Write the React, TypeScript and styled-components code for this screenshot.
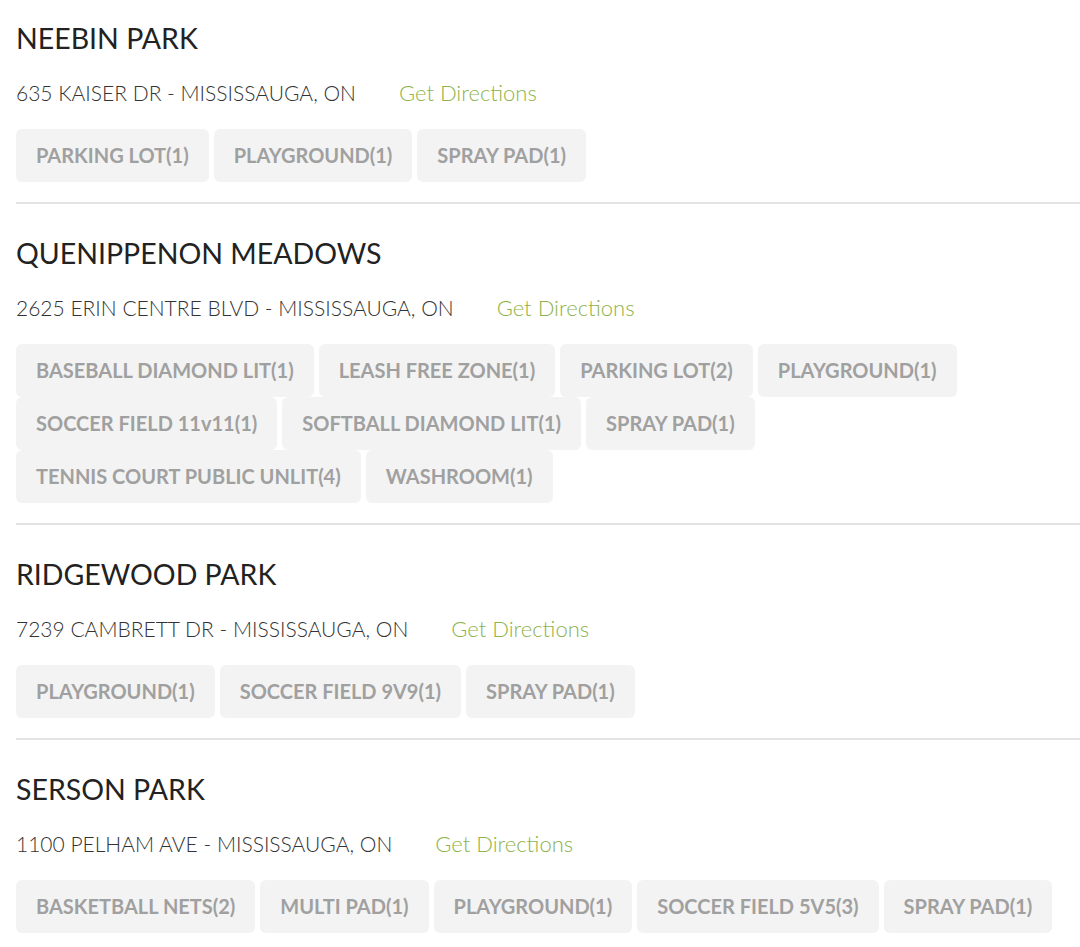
import styled, { createGlobalStyle } from 'styled-components';

const GlobalStyle = createGlobalStyle`
  body {
    margin: 0;
    background: #ffffff;
    font-family: Lato, 'Open Sans', sans-serif;
  }
`;

type Park = {
  name: string;
  address: string;
  amenities: string[];
};

const parks: Park[] = [
  {
    name: 'NEEBIN PARK',
    address: '635 KAISER DR - MISSISSAUGA, ON',
    amenities: ['PARKING LOT(1)', 'PLAYGROUND(1)', 'SPRAY PAD(1)'],
  },
  {
    name: 'QUENIPPENON MEADOWS',
    address: '2625 ERIN CENTRE BLVD - MISSISSAUGA, ON',
    amenities: [
      'BASEBALL DIAMOND LIT(1)',
      'LEASH FREE ZONE(1)',
      'PARKING LOT(2)',
      'PLAYGROUND(1)',
      'SOCCER FIELD 11v11(1)',
      'SOFTBALL DIAMOND LIT(1)',
      'SPRAY PAD(1)',
      'TENNIS COURT PUBLIC UNLIT(4)',
      'WASHROOM(1)',
    ],
  },
  {
    name: 'RIDGEWOOD PARK',
    address: '7239 CAMBRETT DR - MISSISSAUGA, ON',
    amenities: ['PLAYGROUND(1)', 'SOCCER FIELD 9V9(1)', 'SPRAY PAD(1)'],
  },
  {
    name: 'SERSON PARK',
    address: '1100 PELHAM AVE - MISSISSAUGA, ON',
    amenities: [
      'BASKETBALL NETS(2)',
      'MULTI PAD(1)',
      'PLAYGROUND(1)',
      'SOCCER FIELD 5V5(3)',
      'SPRAY PAD(1)',
    ],
  },
];

export default function App() {
  return (
    <>
      <GlobalStyle />
      <List>
        {parks.map((park, i) => (
          <Section key={park.name} $first={i === 0}>
            <Title>{park.name}</Title>
            <AddressRow>
              <Address>{park.address}</Address>
              <Directions href="#">Get Directions</Directions>
            </AddressRow>
            <Chips>
              {park.amenities.map(a => (
                <Chip key={a}>{a}</Chip>
              ))}
            </Chips>
          </Section>
        ))}
      </List>
    </>
  );
}

const List = styled.div`
  padding-left: 16px;
`;

const Section = styled.section<{ $first?: boolean }>`
  padding: ${p => (p.$first ? '18px' : '29px')} 0 20px;
  border-bottom: 2px solid #e3e3e3;
`;

const Title = styled.h2`
  margin: 0 0 19px;
  font-size: 28.5px;
  line-height: 40px;
  font-weight: 400;
  color: #222;
`;

const AddressRow = styled.div`
  display: flex;
  align-items: center;
  gap: 43px;
  height: 30px;
  margin-bottom: 22px;
`;

const Address = styled.span`
  font-size: 21px;
  font-weight: 300;
  color: #333;
`;

const Directions = styled.a`
  font-size: 22px;
  font-weight: 300;
  color: #8db34a;
  text-decoration: none;
`;

const Chips = styled.div`
  display: flex;
  flex-wrap: wrap;
  column-gap: 5px;
  row-gap: 0;
`;

const Chip = styled.span`
  height: 53px;
  line-height: 53px;
  padding: 0 20px;
  background: #f3f3f3;
  border-radius: 6px;
  font-size: 20px;
  font-weight: 700;
  color: #a0a0a0;
  white-space: nowrap;
`;
